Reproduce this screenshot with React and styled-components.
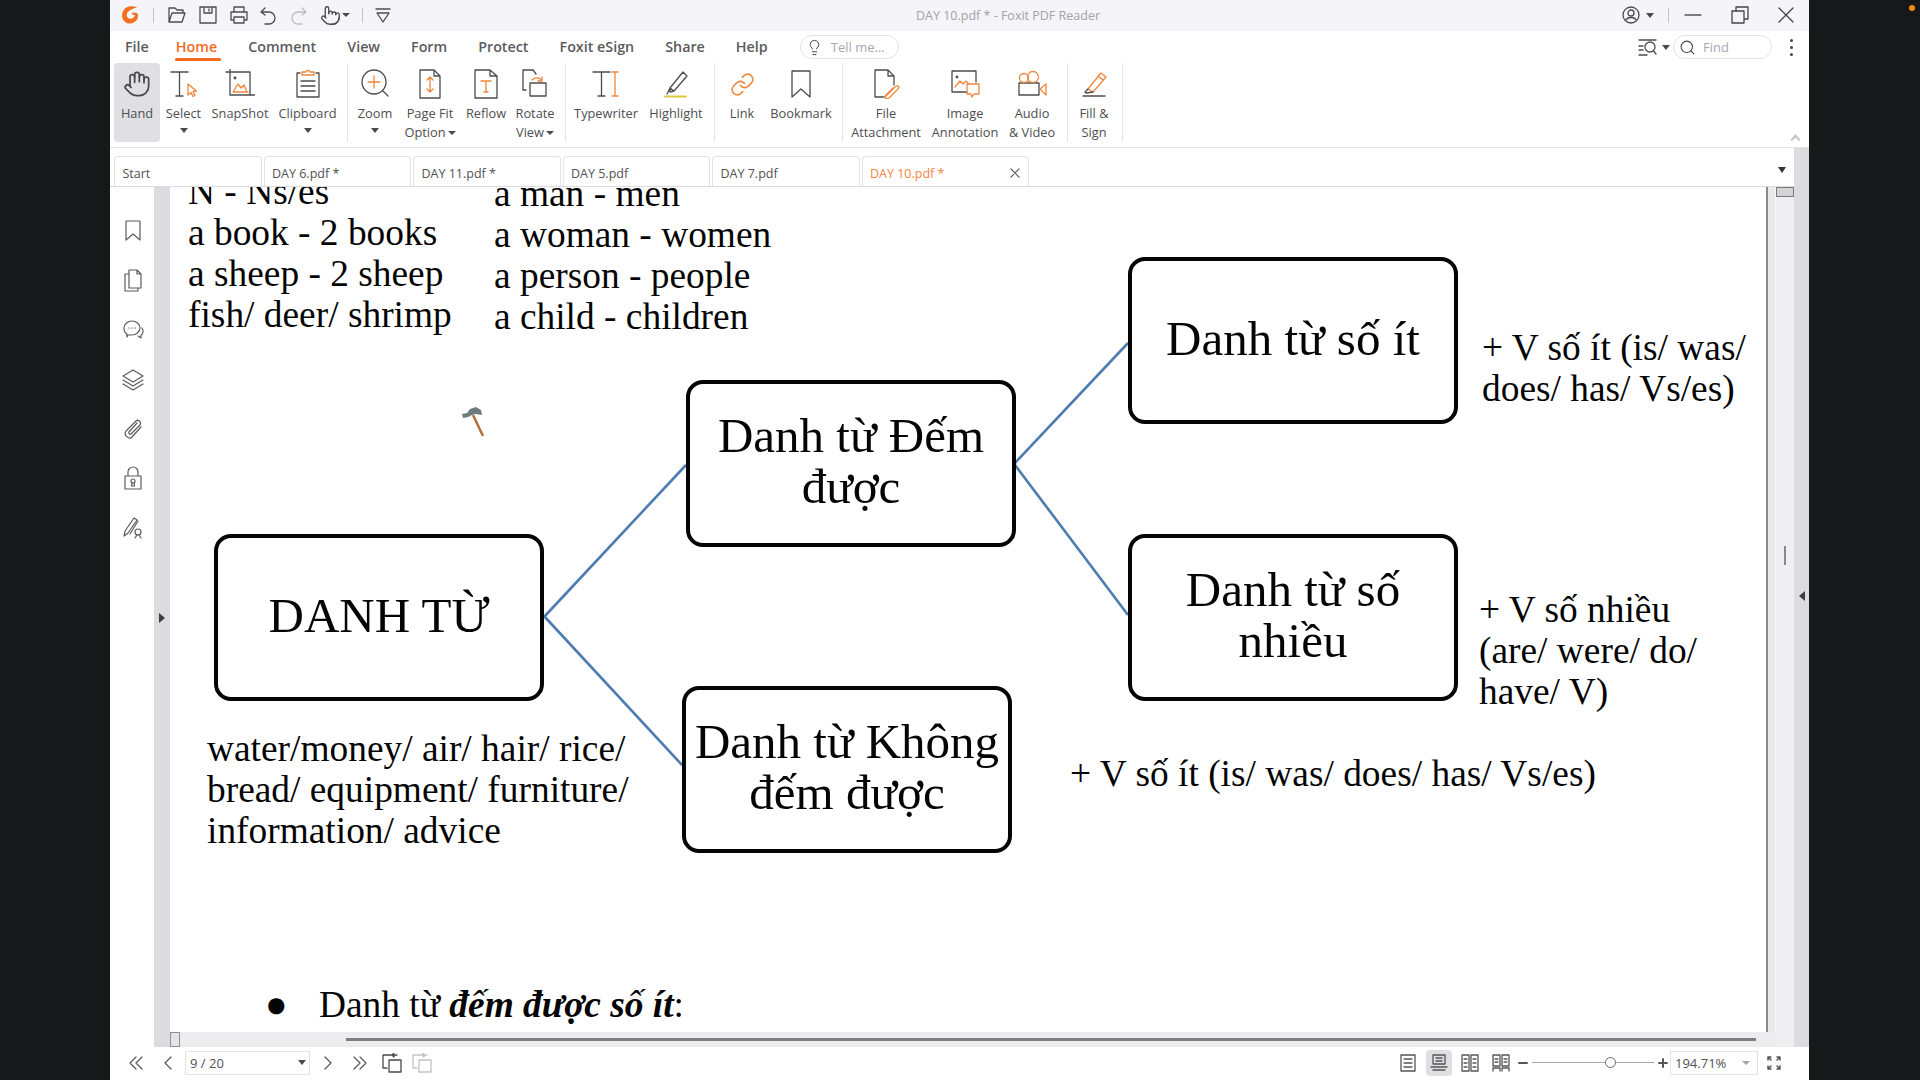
import React from "react";
import styled, { createGlobalStyle } from "styled-components";
import { Hand, Pointer, Link as LinkIcon, Lightbulb, Search } from "lucide-react";

const UI_FONT = '"Open Sans", "Noto Sans", sans-serif';
const DOC_FONT = '"Liberation Serif", "Times New Roman", serif';
const ORANGE = "#f0873c";
const INK = "#4c4c4e";

const GlobalStyle = createGlobalStyle`
  html, body { margin: 0; padding: 0; background: #17181a; overflow: hidden; }
  * { box-sizing: border-box; }
`;

const Screen = styled.div`
  width: 1920px;
  height: 1080px;
  padding: 0 111px 0 110px;
  background: #17181a;
  position: relative;
`;

const RecordingDot = styled.span`
  position: absolute;
  top: 5px;
  right: 5px;
  width: 6px;
  height: 6px;
  border-radius: 50%;
  background: #f08a12;
`;

const AppWindow = styled.div`
  height: 100%;
  display: flex;
  flex-direction: column;
  background: #fff;
  font-family: ${UI_FONT};
  color: ${INK};
`;

/* title bar */
const TitleBar = styled.header`
  height: 31px;
  flex: none;
  display: flex;
  align-items: center;
  padding-bottom: 1px;
  background: #f5f4f8;
`;

const QuickTools = styled.div`
  width: 300px;
  flex: none;
  display: flex;
  align-items: center;
  padding-left: 11px;
  gap: 10.900px;
`;

const TouchTool = styled.span`
  display: flex;
  align-items: center;
`;

const TitleText = styled.div`
  flex: 1;
  text-align: center;
  font-size: 12.500px;
  color: #a3a2a6;
`;

const WindowControls = styled.div`
  width: 203px;
  flex: none;
  display: flex;
  align-items: center;
  padding-left: 16px;
`;

const TitleDivider = styled.span`
  width: 1px;
  height: 15px;
  background: #c4c4c6;
  margin: ${(p) => p.$margin || "0"};
`;

const Caret = styled.span`
  display: inline-block;
  width: 0;
  height: 0;
  border-left: 4px solid transparent;
  border-right: 4px solid transparent;
  border-top: ${(p) => p.$h || 5}px solid ${(p) => p.$color || "#4a4a4a"};
  margin: ${(p) => p.$margin || "0"};
`;

const Glyph = styled.svg`
  flex: none;
  display: block;
  width: ${(p) => p.$w}px;
  height: ${(p) => p.$h || p.$w}px;
  fill: none;
  stroke: ${(p) => p.$color || INK};
  stroke-width: ${(p) => p.$sw ?? 1.3};
  stroke-linecap: round;
  stroke-linejoin: round;
  margin: ${(p) => p.$margin || "0"};
`;

const Accent = styled.g`
  stroke: ${(p) => p.$color || ORANGE};
`;

/* menu row */
const MenuBar = styled.nav`
  height: 32px;
  flex: none;
  display: flex;
  align-items: center;
  padding-left: 15px;
`;

const MenuItems = styled.div`
  display: flex;
  align-items: center;
  gap: 31px;
`;

const MenuItem = styled.span`
  position: relative;
  font-size: 14.300px;
  font-weight: 600;
  line-height: 32px;
  color: ${(p) => (p.$active ? "#f26a1f" : "#5b5b5d")};
  margin-left: ${(p) => (p.$active ? "-4px" : "0")};
  &::after {
    content: "";
    display: ${(p) => (p.$active ? "block" : "none")};
    position: absolute;
    left: -1px;
    right: -4px;
    bottom: 2px;
    height: 3px;
    border-radius: 2px;
    background: #f26a1f;
  }
`;

const Pill = styled.div`
  width: 99px;
  height: 24px;
  border: 1px solid #e4e3e6;
  border-radius: 12px;
  display: flex;
  align-items: center;
  padding-left: 5px;
  gap: ${(p) => p.$gap}px;
  font-size: 13px;
  color: #aaa6b4;
  margin-left: ${(p) => p.$left || 0}px;
`;

const MenuRight = styled.div`
  margin-left: auto;
  display: flex;
  align-items: center;
  padding-right: 16px;
`;

const KebabDots = styled.span`
  display: flex;
  flex-direction: column;
  gap: 4px;
  margin-left: 18px;
  & > i {
    width: 3px;
    height: 3px;
    border-radius: 50%;
    background: #444;
  }
`;

/* ribbon */
const Ribbon = styled.section`
  height: 85px;
  flex: none;
  display: flex;
  align-items: flex-start;
  padding-left: 4px;
  border-bottom: 1px solid #e3e3e5;
  position: relative;
`;

const RibbonGroup = styled.div`
  height: 79px;
  display: flex;
  padding-right: ${(p) => p.$pad || 5}px;
  border-right: 1px solid #e6e6e8;
`;

const RibbonButton = styled.div`
  width: ${(p) => p.$w}px;
  height: 79px;
  flex: none;
  display: flex;
  flex-direction: column;
  align-items: center;
  padding-top: 6px;
  border-radius: 4px;
  background: ${(p) => (p.$active ? "#e0dfe3" : "transparent")};
`;

const RibbonIcon = styled.div`
  height: 30px;
  display: flex;
  align-items: center;
  justify-content: center;
`;

const RibbonLabel = styled.div`
  margin-top: 5px;
  font-size: 12.800px;
  line-height: 19px;
  text-align: center;
  white-space: nowrap;
  color: #4e4e50;
`;

const CollapseRibbon = styled.span`
  position: absolute;
  right: 10px;
  bottom: 4px;
  width: 7px;
  height: 7px;
  border-left: 2px solid #c2c2c4;
  border-top: 2px solid #c2c2c4;
  transform: rotate(45deg);
`;

/* tabs */
const TabRow = styled.div`
  height: 39px;
  flex: none;
  display: flex;
`;

const TabStrip = styled.div`
  flex: 1;
  display: flex;
  align-items: flex-end;
  gap: 2px;
  padding-left: 4px;
  padding-right: 8px;
  border-bottom: 1px solid #dcdcde;
`;

const Tab = styled.div`
  width: ${(p) => (p.$active ? 167 : 147.500)}px;
  height: 30px;
  display: flex;
  align-items: center;
  justify-content: space-between;
  padding: 3px 8px 0 7.500px;
  border: 1px solid #e3e3e6;
  border-bottom: none;
  border-radius: 4px 4px 0 0;
  font-size: 12.500px;
  color: ${(p) => (p.$active ? "#f5853f" : "#525254")};
`;

const TabMenu = styled.div`
  margin-left: auto;
  align-self: center;
`;

const GutterCap = styled.div`
  width: 15px;
  flex: none;
  background: #dcdbdf;
`;

/* workspace */
const Workspace = styled.main`
  flex: 1;
  min-height: 0;
  display: flex;
`;

const SideRail = styled.aside`
  width: 44px;
  flex: none;
  display: flex;
  flex-direction: column;
  align-items: center;
  gap: 25.700px;
  padding: 31px 0 0 2px;
`;

const RailStrip = styled.div`
  width: ${(p) => p.$w || 16}px;
  flex: none;
  background: #dcdbdf;
  padding-top: ${(p) => p.$top}px;
  display: flex;
  justify-content: center;
`;

const SideArrow = styled.span`
  width: 0;
  height: 0;
  border-top: 5px solid transparent;
  border-bottom: 5px solid transparent;
  ${(p) => (p.$left ? "border-right: 6px solid #3d3d3f;" : "border-left: 6px solid #3d3d3f;")}
`;

const ViewerColumn = styled.div`
  flex: 1;
  min-width: 0;
  display: flex;
  flex-direction: column;
`;

const PageRow = styled.div`
  flex: 1;
  min-height: 0;
  display: flex;
`;

const PageSheet = styled.article`
  flex: 1;
  position: relative;
  overflow: hidden;
  background: #fff;
  border-right: 2px solid #8a8a8c;
  font-family: ${DOC_FONT};
  color: #050505;
`;

const PageEdge = styled.div`
  width: 8px;
  flex: none;
  background: #e9e8eb;
  border-right: 1px solid #f8f8f9;
`;

const HScroll = styled.div`
  height: 15px;
  flex: none;
  display: flex;
  align-items: center;
  background: #ecebee;
  padding-right: 20px;
`;

const HThumb = styled.span`
  width: 10px;
  height: 15px;
  border: 1px solid #8f8f91;
  background: #e4e4e6;
`;

const HTrackLine = styled.span`
  flex: 1;
  height: 3px;
  margin-left: 166px;
  background: #7e7e80;
`;

const VScroll = styled.div`
  width: 18px;
  flex: none;
  display: flex;
  flex-direction: column;
  align-items: center;
  background: #efeef1;
`;

const VThumb = styled.span`
  width: 18px;
  height: 10px;
  border: 1px solid #7b7b7d;
  background: #d4d4d6;
`;

const VGrip = styled.span`
  width: 2px;
  height: 19px;
  margin-top: 349px;
  background: #8a8a8c;
`;

/* page content: free canvas, everything is placed where the PDF has it */
const DocText = styled.div`
  position: absolute;
  left: ${(p) => p.$x}px;
  top: ${(p) => p.$y}px;
  font-size: 37.400px;
  line-height: 41px;
  white-space: pre;
`;

const DiagramBox = styled.div`
  position: absolute;
  left: ${(p) => p.$x}px;
  top: ${(p) => p.$y}px;
  width: ${(p) => p.$w}px;
  height: ${(p) => p.$h}px;
  padding-bottom: 5px;
  border: 4px solid #050505;
  border-radius: 17px;
  background: #fff;
  display: flex;
  align-items: center;
  justify-content: center;
  text-align: center;
  font-size: 49px;
  line-height: 51px;
  white-space: pre;
`;

const DiagramLines = styled.svg`
  position: absolute;
  left: 0;
  top: 0;
  width: 1597px;
  height: 845px;
  stroke: #4d7cb0;
  stroke-width: 2.600;
  fill: none;
`;

const HammerCursor = styled.svg`
  position: absolute;
  left: 290px;
  top: 218px;
  width: 26px;
  height: 36px;
`;

/* status bar */
const StatusBar = styled.footer`
  height: 33px;
  flex: none;
  display: flex;
  align-items: center;
  padding: 0 0 2px 18px;
  background: #fff;
`;

const StatusLeft = styled.div`
  display: flex;
  align-items: center;
`;

const StatusRight = styled.div`
  margin-left: auto;
  display: flex;
  align-items: center;
  padding-right: 27px;
`;

const PageInput = styled.div`
  width: 125px;
  height: 24px;
  border: 1px solid #e3e3e5;
  display: flex;
  align-items: center;
  justify-content: space-between;
  padding: 0 3px 0 4px;
  font-size: 13px;
  color: #505052;
  margin: 0 10px 0 9px;
`;

const ZoomInput = styled(PageInput)`
  width: 88px;
  margin: 0;
  padding: 0 7px 0 4px;
`;

const ViewToggle = styled.span`
  width: 26px;
  height: 26px;
  border-radius: 4px;
  display: flex;
  align-items: center;
  justify-content: center;
  margin-left: ${(p) => p.$left || 0}px;
  background: ${(p) => (p.$active ? "#dfdee2" : "transparent")};
`;

const ZoomSlider = styled.div`
  width: 122px;
  height: 1px;
  background: #a6a6a8;
  position: relative;
  margin: 0 4px;
`;

const ZoomKnob = styled.span`
  position: absolute;
  left: 73px;
  top: -5px;
  width: 11px;
  height: 11px;
  border-radius: 50%;
  border: 1px solid #6c6c6e;
  background: #fff;
`;

const ribbonIcons = {
  hand: <Hand size={28} strokeWidth={1.5} color="#4a4a4a" />,
  select: (
    <Glyph $w={30} viewBox="0 0 30 30">
      <path d="M2 3h17M10.500 3v24M7 27h7" />
      <Accent><path d="M19 15v11l3-2.500 2 4 2-1-2-4 3.500-.5z" /></Accent>
    </Glyph>
  ),
  snap: (
    <Glyph $w={30} viewBox="0 0 30 30">
      <path d="M1 3h24v23M5 0v26h25" />
      <Accent><path d="M8 23l5-8 3 4 3-3 3 7zM8 23h15" /></Accent>
      <circle cx="10" cy="9" r=".8" />
    </Glyph>
  ),
  clip: (
    <Glyph $w={26} $h={30} viewBox="0 0 26 30">
      <path d="M5 4H2v24h22V4h-3M6 12h14M6 17h14M6 22h14" />
      <Accent><path d="M7 6V3h4c0-2 4-2 4 0h4v3z" /></Accent>
    </Glyph>
  ),
  zoom: (
    <Glyph $w={30} viewBox="0 0 30 30">
      <circle cx="14" cy="13" r="12" />
      <path d="M23 22l5 5" />
      <Accent><path d="M14 7v12M8 13h12" /></Accent>
    </Glyph>
  ),
  pagefit: (
    <Glyph $w={26} $h={30} viewBox="0 0 26 30">
      <path d="M3 1h14l6 6v22H3zM17 1v6h6" />
      <Accent><path d="M13 8v15M10 11l3-3 3 3M10 20l3 3 3-3" /></Accent>
    </Glyph>
  ),
  reflow: (
    <Glyph $w={26} $h={30} viewBox="0 0 26 30">
      <path d="M2 1h15l7 6v22H2zM17 1v6h7" />
      <Accent><path d="M8 12h10M13 12v11M11 23h4" /></Accent>
    </Glyph>
  ),
  rotate: (
    <Glyph $w={28} $h={30} viewBox="0 0 28 30">
      <path d="M12 1H2v20h3M12 1l3 4M9 14h16v13H9z" />
      <Accent><path d="M11 11c3-3 8-3 10 1M21 8v4h-4" /></Accent>
    </Glyph>
  ),
  type: (
    <Glyph $w={30} viewBox="0 0 30 30">
      <path d="M2 3h17M10.500 3v24M7 27h7" />
      <Accent><path d="M24 3v24M21 3h6M21 27h6" /></Accent>
    </Glyph>
  ),
  highlight: (
    <Glyph $w={26} $h={30} viewBox="0 0 26 30">
      <path d="M7 19L20 3l4 4L11 22l-4 1zM7 19l4 3M4 25l3-6" />
      <Accent $color="#dcc83a"><path d="M2 27.500h21" strokeWidth="2" /></Accent>
    </Glyph>
  ),
  link: <LinkIcon size={25} strokeWidth={1.5} color={ORANGE} />,
  bookmark: (
    <Glyph $w={22} $h={30} viewBox="0 0 22 30">
      <path d="M2 2h18v26l-9-8-9 8z" />
    </Glyph>
  ),
  attach: (
    <Glyph $w={28} $h={30} viewBox="0 0 28 30">
      <path d="M12 28H3V1h13l6 6v9M16 1v6h6" />
      <Accent><path d="M14 27l9-9c3-3 5 0 3 2l-9 9c-3 2-5-1-3-3l7-7" /></Accent>
    </Glyph>
  ),
  image: (
    <Glyph $w={30} $h={30} viewBox="0 0 30 30">
      <path d="M17 23H2V2h24v11" />
      <circle cx="7" cy="8" r=".8" />
      <Accent><path d="M5 18l5-6 3 3 3-3 3 3M17 15h12v10h-5l-2 3-1-3h-4z" /></Accent>
    </Glyph>
  ),
  video: (
    <Glyph $w={30} $h={30} viewBox="0 0 30 30">
      <path d="M2 14h20v12H2z" />
      <Accent>
        <circle cx="7" cy="9" r="4.500" />
        <circle cx="16" cy="8" r="5.500" />
        <path d="M23 20l6-5v11z" />
      </Accent>
    </Glyph>
  ),
  sign: (
    <Glyph $w={28} $h={30} viewBox="0 0 28 30">
      <Accent><path d="M8 20L21 4l5 4-13 15zM18 7l5 4" /></Accent>
      <path d="M8 20l-3 3 1 1 7-1M3 27h22" />
    </Glyph>
  ),
};

const ribbonGroups = [
  {
    pad: 5,
    items: [
      { w: 46, icon: "hand", label: "Hand", active: true },
      { w: 47, icon: "select", label: "Select", caret: true },
      { w: 66, icon: "snap", label: "SnapShot" },
      { w: 69, icon: "clip", label: "Clipboard", caret: true },
    ],
  },
  {
    pad: 9,
    items: [
      { w: 54, icon: "zoom", label: "Zoom", caret: true },
      { w: 56, icon: "pagefit", label: "Page Fit", second: "Option", inline: true },
      { w: 56, icon: "reflow", label: "Reflow" },
      { w: 42, icon: "rotate", label: "Rotate", second: "View", inline: true },
    ],
  },
  {
    pad: 8,
    items: [
      { w: 80, icon: "type", label: "Typewriter" },
      { w: 60, icon: "highlight", label: "Highlight" },
    ],
  },
  {
    pad: 9,
    items: [
      { w: 54, icon: "link", label: "Link" },
      { w: 64, icon: "bookmark", label: "Bookmark" },
    ],
  },
  {
    pad: 4,
    items: [
      { w: 86, icon: "attach", label: "File", second: "Attachment" },
      { w: 72, icon: "image", label: "Image", second: "Annotation" },
      { w: 62, icon: "video", label: "Audio", second: "& Video" },
    ],
  },
  {
    pad: 2,
    items: [{ w: 52, icon: "sign", label: "Fill &", second: "Sign" }],
  },
];

const tabs = ["Start", "DAY 6.pdf *", "DAY 11.pdf *", "DAY 5.pdf", "DAY 7.pdf"];
const menus = ["Comment", "View", "Form", "Protect", "Foxit eSign", "Share", "Help"];

function RibbonItem({ item }) {
  return (
    <RibbonButton $w={item.w} $active={item.active}>
      <RibbonIcon>{ribbonIcons[item.icon]}</RibbonIcon>
      <RibbonLabel>
        {item.label}
        {item.second && <br />}
        {item.second}
        {item.inline && <Caret $h={4} $margin="0 0 2px 2px" />}
        {item.caret && (
          <>
            <br />
            <Caret $margin="0 0 4px" />
          </>
        )}
      </RibbonLabel>
    </RibbonButton>
  );
}

function RailIcon({ children }) {
  return (
    <Glyph $w={24} $color="#5c5c5e" $sw={1.2} viewBox="0 0 24 24">
      {children}
    </Glyph>
  );
}

function PageTurn({ faded }) {
  const c = faded ? "#c2c2c4" : "#4a4a4c";
  return (
    <Glyph $w={20} $color={c} viewBox="0 0 20 20" $margin="0 5px">
      <path d="M5 15H1V2h11v2M7 7h12v12H7zM15 2h-5M12 0l-2 2 2 2" />
    </Glyph>
  );
}

export default function App() {
  return (
    <Screen>
      <GlobalStyle />
      <RecordingDot />
      <AppWindow>
        <TitleBar>
          <QuickTools>
            <Glyph $w={20} viewBox="0 0 20 20" $sw={0}>
              <path
                d="M16 2.500C11 0 3.500 1 1.500 7.500c-2 6.500 3 11.500 8 11 5-.5 8-4.500 7.500-8.500-.2-1.700-1.500-2.500-3-2.500l-3.500.6 1.500 1.900 2-.2c-.3 2.500-2.500 4.300-5 3.900C6 13.300 5 10.500 6.300 8c1.500-3 6-4.500 9.700-5.500z"
                fill="#f2701f"
                stroke="none"
              />
            </Glyph>
            <TitleDivider $margin="0 1px" />
            <Glyph $w={20} viewBox="0 0 20 20" $margin="0 0 0 1px">
              <path d="M2 17V3h6l2 2h6v3M2 17l3-9h13l-3 9z" />
            </Glyph>
            <Glyph $w={20} viewBox="0 0 20 20">
              <path d="M2 2h16v16H2zM6 2v6h8V2M11 4v2" />
            </Glyph>
            <Glyph $w={20} viewBox="0 0 20 20">
              <path d="M5 7V2h10v5M5 15H2V7h16v8h-3M5 12h10v6H5z" />
            </Glyph>
            <Glyph $w={20} viewBox="0 0 20 20" $margin="0 0 0 -1px">
              <path d="M3 7h8a6 6 0 0 1 0 12H7M3 7l4-4M3 7l4 3" />
            </Glyph>
            <Glyph $w={20} $color="#bdbdbf" viewBox="0 0 20 20">
              <path d="M17 7H9a6 6 0 0 0 0 12h4M17 7l-4-4M17 7l-4 3" />
            </Glyph>
            <TouchTool>
              <Pointer size={21} strokeWidth={1.5} color="#4a4a4a" />
              <Caret $h={4} $margin="0 0 0 1px" />
            </TouchTool>
            <TitleDivider $margin="0 0 0 1px" />
            <Glyph $w={18} viewBox="0 0 18 18">
              <path d="M2 3h14M3 7h12l-6 9z" />
            </Glyph>
          </QuickTools>
          <TitleText>DAY 10.pdf * - Foxit PDF Reader</TitleText>
          <WindowControls>
            <Glyph $w={18} viewBox="0 0 18 18">
              <circle cx="9" cy="9" r="8" />
              <circle cx="9" cy="7" r="3" />
              <path d="M3.500 14.500c2-4 9-4 11 0" />
            </Glyph>
            <Caret $h={5} $margin="0 0 0 6px" />
            <TitleDivider $margin="0 15px 0 14px" />
            <Glyph $w={18} viewBox="0 0 18 18" $color="#555">
              <path d="M1 9h16" />
            </Glyph>
            <Glyph $w={18} viewBox="0 0 18 18" $margin="0 0 0 29px" $color="#444">
              <path d="M1 5h12v12H1zM5 5V1h12v12h-4" />
            </Glyph>
            <Glyph $w={18} viewBox="0 0 18 18" $margin="0 0 0 28px" $color="#444">
              <path d="M2 2l14 14M16 2L2 16" />
            </Glyph>
          </WindowControls>
        </TitleBar>

        <MenuBar>
          <MenuItems>
            <MenuItem>File</MenuItem>
            <MenuItem $active>Home</MenuItem>
            {menus.map((m) => (
              <MenuItem key={m}>{m}</MenuItem>
            ))}
          </MenuItems>
          <Pill $left={32} $gap={8}>
            <Lightbulb size={17} strokeWidth={1.4} color="#444" />
            Tell me...
          </Pill>
          <MenuRight>
            <Glyph $w={20} viewBox="0 0 20 20">
              <path d="M1 3h17M1 9h4M1 13h4M1 18h8" />
              <circle cx="12" cy="10" r="5" />
              <path d="M15.500 14l2.500 3" />
            </Glyph>
            <Caret $h={5} $margin="0 3px 0 4px" />
            <Pill $gap={7}>
              <Search size={17} strokeWidth={1.5} color="#444" />
              Find
            </Pill>
            <KebabDots>
              <i />
              <i />
              <i />
            </KebabDots>
          </MenuRight>
        </MenuBar>

        <Ribbon>
          {ribbonGroups.map((g, i) => (
            <RibbonGroup key={i} $pad={g.pad}>
              {g.items.map((item) => (
                <RibbonItem key={item.label} item={item} />
              ))}
            </RibbonGroup>
          ))}
          <CollapseRibbon />
        </Ribbon>

        <TabRow>
          <TabStrip>
            {tabs.map((t) => (
              <Tab key={t}>{t}</Tab>
            ))}
            <Tab $active>
              DAY 10.pdf *
              <Glyph $w={10} viewBox="0 0 11 11" $color="#555">
                <path d="M1 1l9 9M10 1l-9 9" />
              </Glyph>
            </Tab>
            <TabMenu>
              <Caret $h={6} $color="#333" />
            </TabMenu>
          </TabStrip>
          <GutterCap />
        </TabRow>

        <Workspace>
          <SideRail>
            <RailIcon>
              <path d="M5 3h14v19l-7-6-7 6z" />
            </RailIcon>
            <RailIcon>
              <path d="M8 2h8l4 4v14H8zM16 2v4h4M8 6H4v17h13v-3" />
            </RailIcon>
            <RailIcon>
              <path d="M3 11c0-4 4-7 8-7s8 3 8 7-4 7-8 7H7l-1 2v-3c-2-1-3-3-3-6zM21 11c2 3 1 6-1 7v3l-3-2" />
              <path d="M8 11h.5M11 11h.5M14 11h.5" />
            </RailIcon>
            <RailIcon>
              <path d="M12 3l10 6-10 6L2 9zM2 13l10 6 10-6M2 17l10 6 10-6" />
            </RailIcon>
            <RailIcon>
              <path d="M20 10l-9 10c-3 3-9-2-6-6L15 4c2-2 6 1 4 4l-9 9c-1 1-3-1-2-2l8-9" />
            </RailIcon>
            <RailIcon>
              <path d="M4 10h16v13H4zM7 10V6a5 5 0 0 1 10 0v4" />
              <circle cx="12" cy="15" r="2" />
              <path d="M11 17l-.5 3h3l-.5-3" />
            </RailIcon>
            <RailIcon>
              <path d="M3 20l1-5L13 2l3 2-9 13zM9 18l8-13" />
              <circle cx="17" cy="16" r="3" />
              <path d="M14 22l2-3M20 22l-2-3" />
            </RailIcon>
          </SideRail>
          <RailStrip $top={426}>
            <SideArrow />
          </RailStrip>
          <ViewerColumn>
            <PageRow>
              <PageSheet>
                <DiagramLines viewBox="0 0 1597 845">
                  <path d="M374 430L516 278M845 276L958 156M845 278L958 428M374 429L512 578" />
                </DiagramLines>
                <DiagramBox $x={44} $y={347} $w={330} $h={167}>DANH TỪ</DiagramBox>
                <DiagramBox $x={516} $y={193} $w={330} $h={167}>{"Danh từ Đếm\nđược"}</DiagramBox>
                <DiagramBox $x={958} $y={70} $w={330} $h={167}>Danh từ số ít</DiagramBox>
                <DiagramBox $x={958} $y={347} $w={330} $h={167}>{"Danh từ số\nnhiều"}</DiagramBox>
                <DiagramBox $x={512} $y={499} $w={330} $h={167}>{"Danh từ Không\nđếm được"}</DiagramBox>

                <DocText $x={18} $y={-16}>{"N - Ns/es\na book - 2 books\na sheep - 2 sheep\nfish/ deer/ shrimp"}</DocText>
                <DocText $x={324} $y={-14}>{"a man - men\na woman - women\na person - people\na child - children"}</DocText>
                <DocText $x={1312} $y={140}>{"+ V số ít (is/ was/\ndoes/ has/ Vs/es)"}</DocText>
                <DocText $x={1309} $y={402}>{"+ V số nhiều\n(are/ were/ do/\nhave/ V)"}</DocText>
                <DocText $x={37} $y={541}>{"water/money/ air/ hair/ rice/\nbread/ equipment/ furniture/\ninformation/ advice"}</DocText>
                <DocText $x={900} $y={566}>+ V số ít (is/ was/ does/ has/ Vs/es)</DocText>
                <DocText $x={95} $y={797}>●</DocText>
                <DocText $x={149} $y={797}>
                  Danh từ <b><i>đếm được số ít</i></b>:
                </DocText>

                <HammerCursor viewBox="0 0 26 36">
                  <path d="M13 10l10 21" stroke="#b0703a" strokeWidth="2.500" fill="none" />
                  <path d="M2 9l5-1 3-4 6-2 5 3 1 5-7-1-3 1-4 2-5 1z" fill="#6f7a7c" />
                </HammerCursor>
              </PageSheet>
              <PageEdge />
            </PageRow>
            <HScroll>
              <HThumb />
              <HTrackLine />
            </HScroll>
          </ViewerColumn>
          <VScroll>
            <VThumb />
            <VGrip />
          </VScroll>
          <RailStrip $top={404} $w={15}>
            <SideArrow $left />
          </RailStrip>
        </Workspace>

        <StatusBar>
          <StatusLeft>
            <Glyph $w={16} $color="#5a5a5c" viewBox="0 0 16 16">
              <path d="M8 2L2 8l6 6M14 2L8 8l6 6" />
            </Glyph>
            <Glyph $w={16} $color="#5a5a5c" viewBox="0 0 16 16" $margin="0 0 0 16px">
              <path d="M11 2L5 8l6 6" />
            </Glyph>
            <PageInput>
              9 / 20
              <Caret $h={5} />
            </PageInput>
            <Glyph $w={16} $color="#5a5a5c" viewBox="0 0 16 16">
              <path d="M5 2l6 6-6 6" />
            </Glyph>
            <Glyph $w={16} $color="#5a5a5c" viewBox="0 0 16 16" $margin="0 9px 0 16px">
              <path d="M2 2l6 6-6 6M8 2l6 6-6 6" />
            </Glyph>
            <PageTurn />
            <PageTurn faded />
          </StatusLeft>
          <StatusRight>
            <ViewToggle>
              <Glyph $w={18} viewBox="0 0 18 18" $color="#555"><path d="M2 1h14v16H2zM5 5h8M5 9h8M5 13h8" /></Glyph>
            </ViewToggle>
            <ViewToggle $active $left={5}>
              <Glyph $w={18} viewBox="0 0 18 18" $color="#555"><path d="M3 1h12v9H3zM6 4h6M6 7h6M1 13h16M3 16h12" /></Glyph>
            </ViewToggle>
            <ViewToggle $left={5}>
              <Glyph $w={18} viewBox="0 0 18 18" $color="#555"><path d="M1 1h7v16H1zM10 1h7v16h-7zM3 5h3M3 9h3M3 13h3M12 5h3M12 9h3M12 13h3" /></Glyph>
            </ViewToggle>
            <ViewToggle $left={5}>
              <Glyph $w={18} viewBox="0 0 18 18" $color="#555"><path d="M1 1h7v11H1zM10 1h7v11h-7zM3 5h3M3 8h3M12 5h3M12 8h3M1 17v-3h7v3M10 17v-3h7v3" /></Glyph>
            </ViewToggle>
            <Glyph $w={10} viewBox="0 0 10 10" $color="#555" $sw={2} $margin="0 0 0 4px">
              <path d="M1 5h8" />
            </Glyph>
            <ZoomSlider>
              <ZoomKnob />
            </ZoomSlider>
            <Glyph $w={10} viewBox="0 0 10 10" $color="#555" $sw={2} $margin="0 2px 0 0">
              <path d="M1 5h8M5 1v8" />
            </Glyph>
            <ZoomInput>
              194.71%
              <Caret $h={4} $color="#a5a5a7" />
            </ZoomInput>
            <Glyph $w={16} viewBox="0 0 16 16" $color="#555" $sw={1.5} $margin="0 0 0 8px">
              <path d="M2 2l3 3M2 2h3M2 2v3M14 2l-3 3M14 2h-3M14 2v3M2 14l3-3M2 14h3M2 14v-3M14 14l-3-3M14 14h-3M14 14v-3" />
            </Glyph>
          </StatusRight>
        </StatusBar>
      </AppWindow>
    </Screen>
  );
}
